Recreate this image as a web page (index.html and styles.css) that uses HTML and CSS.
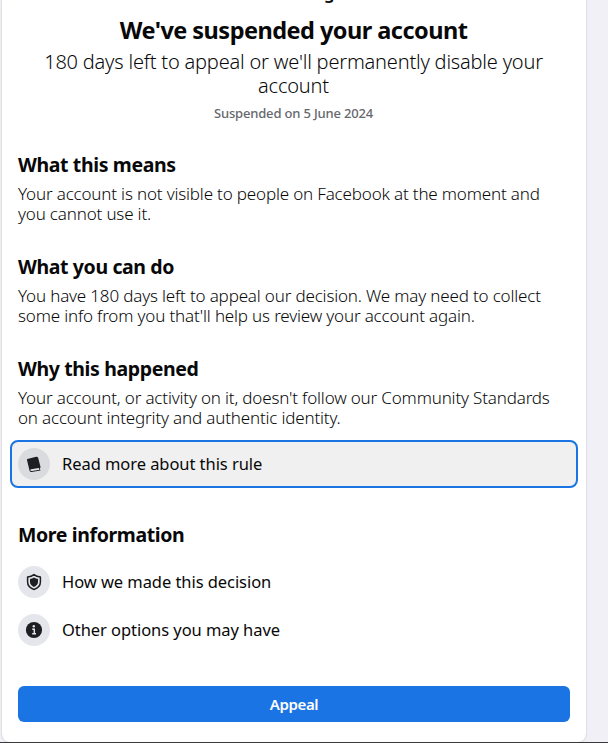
FILE: index.html
```html
<!DOCTYPE html>
<html lang="en">
<head>
<meta charset="utf-8">
<title>Account suspended</title>
<link rel="stylesheet" href="styles.css">
</head>
<body>
<main class="card">
  <div class="name">g</div>
  <header class="header">
    <h1>We've suspended your account</h1>
    <p class="subtitle">180 days left to appeal or we'll permanently disable your<br>account</p>
    <p class="date">Suspended on 5 June 2024</p>
  </header>
  <section class="section">
    <h2>What this means</h2>
    <p>Your account is not visible to people on Facebook at the moment and<br>you cannot use it.</p>
  </section>
  <section class="section">
    <h2>What you can do</h2>
    <p>You have 180 days left to appeal our decision. We may need to collect<br>some info from you that'll help us review your account again.</p>
  </section>
  <section class="section">
    <h2>Why this happened</h2>
    <p>Your account, or activity on it, doesn't follow our Community Standards<br>on account integrity and authentic identity.</p>
  </section>
  <div class="row focused">
    <span class="icon">
      <svg width="20" height="20" viewBox="0 0 20 20"><path d="M3.4 5 12.2 2.7Q13.7 2.4 14.2 4L16.6 13.2 15.9 14.2 16.4 16.4 7.6 18Q6 18.2 5.5 16.5L3 6Q2.9 5.2 3.4 5Z" fill="#1c1e21"/><path d="M7.2 15.2 15 13.9 15.4 15.7 7.9 17Q6.3 17.1 6.3 16.1 6.4 15.4 7.2 15.2Z" fill="#e4e5e8"/></svg>
    </span>
    <span class="label">Read more about this rule</span>
  </div>
  <section class="section more">
    <h2>More information</h2>
    <div class="row">
      <span class="icon">
        <svg width="20" height="20" viewBox="0 0 20 20"><path d="M10 2.6Q12.5 4.5 16.4 5V10Q16.4 15.3 10 17.5 3.6 15.3 3.6 10V5Q7.5 4.5 10 2.6Z" fill="none" stroke="#1c1e21" stroke-width="1.5" stroke-linejoin="round"/><path d="M10 5.4Q11.7 6.6 14 6.9V10Q14 13.2 10 15 6 13.2 6 10V6.9Q8.3 6.6 10 5.4Z" fill="#1c1e21"/></svg>
      </span>
      <span class="label">How we made this decision</span>
    </div>
    <div class="row">
      <span class="icon">
        <svg width="20" height="20" viewBox="0 0 20 20"><circle cx="10" cy="10" r="8.1" fill="#1c1e21"/><circle cx="9.8" cy="6.2" r="1.2" fill="#e4e6eb"/><path d="M8.2 9.2H10.3V13.6M8.2 13.8H12" fill="none" stroke="#e4e6eb" stroke-width="1.4"/></svg>
      </span>
      <span class="label">Other options you may have</span>
    </div>
  </section>
  <button class="appeal">Appeal</button>
</main>
</body>
</html>
```
FILE: styles.css
```css
* { box-sizing: border-box; }
body {
  margin: 0;
  height: 743px;
  overflow: hidden;
  background: #f0f0f6;
  border-bottom: 1px solid #3a3a3c;
  color: #080809;
  font-family: "Noto Sans", "Open Sans", sans-serif;
}
h1, h2, p { margin: 0; white-space: nowrap; }
.card {
  display: flow-root;
  width: 584px;
  height: 742px;
  margin-left: 2px;
  padding: 0 16px;
  background: #fff;
  border-radius: 0 0 8px 8px;
  box-shadow: 0 0 2px rgba(0, 0, 0, .25);
}
.name {
  height: 16px;
  margin-top: -7px;
  margin-bottom: 7px;
  padding-left: 306px;
  font-size: 17px;
  font-weight: 600;
  line-height: 0;
}
.header { text-align: center; width: 551px; }
h1 { font-size: 23.5px; line-height: 28px; font-weight: 700; letter-spacing: -.53px; }
.subtitle { margin-top: 6px; font-size: 20px; line-height: 24px; font-weight: 300; letter-spacing: -.2px; }
.date { margin-top: 7px; font-size: 13px; line-height: 16px; font-weight: 500; letter-spacing: -.17px; color: #65686c; }
.section { padding-top: 31px; }
.header + .section { padding-top: 32px; }
h2 { font-size: 19.5px; line-height: 24px; font-weight: 700; letter-spacing: -.38px; }
.section p { margin-top: 7px; font-size: 17px; line-height: 20px; font-weight: 300; letter-spacing: -.17px; }
.row {
  display: flex;
  align-items: center;
  gap: 12px;
  height: 48px;
  font-size: 16.5px;
  font-weight: 450;
  letter-spacing: -.06px;
}
.label { padding-bottom: 2px; }
.focused {
  margin: 12px -8px 0 -8px;
  padding-left: 6px;
  background: #f0f0f0;
  border: 2px solid #1b74e4;
  border-radius: 8px;
}
.icon {
  display: flex;
  align-items: center;
  justify-content: center;
  width: 32px;
  height: 32px;
  border-radius: 50%;
  background: #e4e6eb;
}
.focused .icon { background: #d9dbdf; }
.more { padding-top: 35px; }
.more h2 { margin-bottom: 11px; }
.appeal {
  display: block;
  width: 552px;
  height: 36px;
  margin-top: 32px;
  padding: 0;
  border: 0;
  border-radius: 6px;
  background: #1b74e4;
  color: #fff;
  font: 600 15px/20px "Noto Sans", sans-serif;
  letter-spacing: -.4px;
}
```
